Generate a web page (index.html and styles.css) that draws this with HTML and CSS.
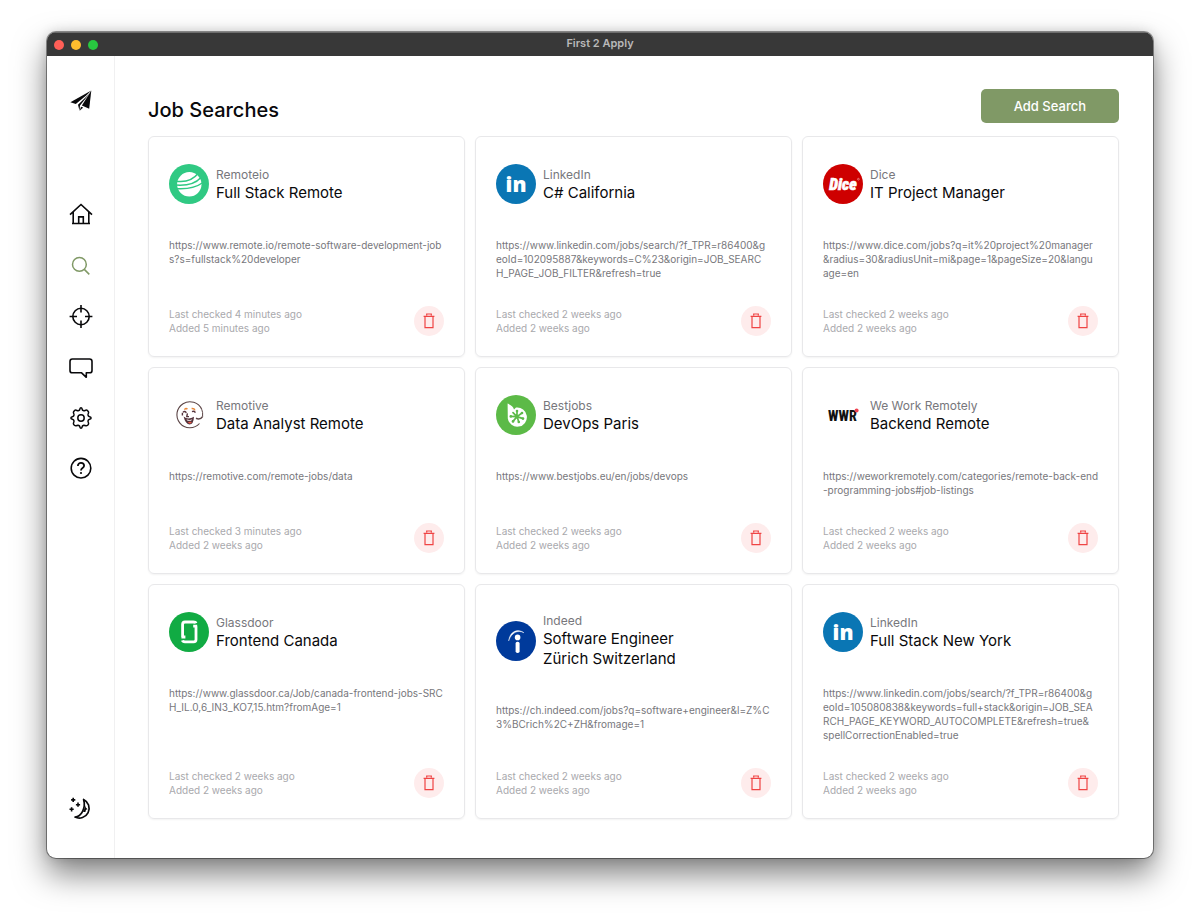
FILE: index.html
```html
<!DOCTYPE html>
<html lang="en">
<head>
    <meta charset="UTF-8">
    <meta name="viewport" content="width=device-width, initial-scale=1.0">
    <title>First 2 Apply</title>
    <link rel="stylesheet" href="styles.css">
</head>
<body>
    <!-- Shared icon -->
    <svg class="sprite" aria-hidden="true">
        <symbol id="icon-trash" viewBox="0 0 16 16">
            <path d="M5.7 2.6V1h4.6V2.6M2.6 3.3h10.8M4 3.3V14.6h8V3.3" fill="none" stroke="currentColor" stroke-width="1.2"/>
        </symbol>
    </svg>

    <div class="window">
        <header class="titlebar">
            <div class="controls">
                <button class="control close" type="button" aria-label="Close"></button>
                <button class="control minimize" type="button" aria-label="Minimize"></button>
                <button class="control zoom" type="button" aria-label="Zoom"></button>
            </div>
            <span class="window-title">First 2 Apply</span>
        </header>

        <div class="layout">
            <nav class="sidebar" aria-label="Main">
                <a class="nav-link brand" href="#" aria-label="First 2 Apply">
                    <svg viewBox="0 0 24 24" fill="currentColor">
                        <path d="M22.3 1.6 1.4 13.2 6.8 15 17.2 6.6Z"/>
                        <path d="M20.6 4.4 9 15.8 10.5 21.8 11 16.6Z"/>
                        <path d="M22.3 1.6 12.9 16.6 20.2 19.8Z"/>
                        <path d="M12 17.7 14.2 18.6 10.7 21.8Z"/>
                    </svg>
                </a>
                <a class="nav-link" href="#" aria-label="Home">
                    <svg viewBox="0 0 24 24" fill="none" stroke="currentColor" stroke-width="1.6">
                        <path d="M1 12.7 12 2.5 23 12.7M4.2 10.2V21.5H19.8V10.2M9.7 21.5V14.9H14.3V21.5M3 21.5H21"/>
                    </svg>
                </a>
                <a class="nav-link active" href="#" aria-label="Job searches">
                    <svg viewBox="0 0 24 24" fill="none" stroke="currentColor" stroke-width="1.5">
                        <circle cx="10.4" cy="11.4" r="6.9"/>
                        <path d="M15.3 16.4 20.3 21.4"/>
                    </svg>
                </a>
                <a class="nav-link" href="#" aria-label="Filters">
                    <svg viewBox="0 0 24 24" fill="none" stroke="currentColor" stroke-width="1.6">
                        <circle cx="12" cy="12.5" r="8.2"/>
                        <path d="M12 1V8.5M12 16.5V24M.6 12.5H8M16 12.5H23.4"/>
                    </svg>
                </a>
                <a class="nav-link" href="#" aria-label="Feedback">
                    <svg viewBox="0 0 24 24" fill="none" stroke="currentColor" stroke-width="1.6" stroke-linejoin="round">
                        <path d="M3.4 4H20.6Q23 4 23 6.4V15.4Q23 17.8 20.6 17.8H17.3V22.3L12.6 17.8H3.4Q1 17.8 1 15.4V6.4Q1 4 3.4 4Z"/>
                    </svg>
                </a>
                <a class="nav-link" href="#" aria-label="Settings">
                    <svg viewBox="0 0 24 24" fill="none" stroke="currentColor" stroke-width="1.5" stroke-linejoin="round">
                        <path d="M10.3 4.3C11 3.9 10.6 1.8 12 1.8S13 3.9 13.7 4.3L14.9 4.8C15.8 5 17 3.4 18.3 4.4L19.3 5.5C20.3 6.8 18.8 8 19 8.9L19.5 10.2C20 11 22.1 10.6 22.1 12S20 13 19.5 13.8L19 15C18.8 16 20.3 17.2 19.3 18.4L18.3 19.5C17 20.5 15.8 19 14.9 19.2L13.7 19.7C13 20.1 13.4 22.2 12 22.2S11 20.1 10.3 19.7L9.1 19.2C8.2 19 7 20.5 5.7 19.5L4.7 18.4C3.7 17.2 5.2 16 5 15L4.5 13.8C4 13 1.9 13.4 1.9 12S4 11 4.5 10.2L5 8.9C5.2 8 3.7 6.8 4.7 5.5L5.7 4.4C7 3.4 8.2 5 9.1 4.8Z"/>
                        <circle cx="12" cy="12" r="3.2"/>
                    </svg>
                </a>
                <a class="nav-link" href="#" aria-label="Help">
                    <svg viewBox="0 0 24 24" fill="none" stroke="currentColor" stroke-width="1.6">
                        <circle cx="12" cy="11.2" r="9.8"/>
                        <path d="M8.9 9C8.9 4.8 15.1 5.1 15.1 8.8 15.1 11.2 12 11 12 13.5" stroke-width="1.8"/>
                        <circle cx="12" cy="16" r="1.1" fill="currentColor" stroke="none"/>
                    </svg>
                </a>
                <button class="nav-link theme" type="button" aria-label="Toggle theme">
                    <svg viewBox="0 0 24 24" fill="none" stroke="currentColor" stroke-width="1.7">
                        <path d="M14.6 2.4A9.7 9.7 0 1 1 6 20C12.4 19.6 17 11 14.6 2.4Z" stroke-linejoin="round"/>
                        <path d="M16 8.2 16.8 10.4 18.6 12.2 17 12.8 16.4 15 14 15 11.6 17.8Q15.8 14 16 8.2Z" fill="currentColor" stroke="none"/>
                        <path d="M4.2 .8V5M2.1 2.9H6.3M9 5.6V9.8M6.9 7.7H11.1M2.6 10.2V14.4M.5 12.3H4.7" stroke-width="1.6"/>
                    </svg>
                </button>
            </nav>

            <main class="content">
                <div class="page-header">
                    <h1>Job Searches</h1>
                    <button class="add-button" type="button">Add Search</button>
                </div>

                <div class="cards">
                    <article class="card">
                        <div class="card-header">
                            <svg class="logo" viewBox="0 0 40 40" aria-hidden="true">
                                <circle cx="20" cy="20" r="20" fill="#30c983"/>
                                <circle cx="20.3" cy="20.3" r="12.2" fill="#fff"/>
                                <path d="M7 17.2C16 18.6 24 16 29.5 9M7 21C18 21.8 27 19 32 13.4M7 24.6C18 25.4 27 23.6 34 18.5" fill="none" stroke="#30c983" stroke-width="1.5"/>
                            </svg>
                            <div class="card-heading">
                                <p class="site">Remoteio</p>
                                <h2>Full Stack Remote</h2>
                            </div>
                        </div>
                        <p class="url">https://www.remote.io/remote-software-development-jobs?s=fullstack%20developer</p>
                        <div class="card-footer">
                            <p class="dates">Last checked 4 minutes ago<br>Added 5 minutes ago</p>
                            <button class="delete" type="button" aria-label="Delete search"><svg><use href="#icon-trash"/></svg></button>
                        </div>
                    </article>

                    <article class="card">
                        <div class="card-header">
                            <svg class="logo" viewBox="0 0 40 40" aria-hidden="true">
                                <circle cx="20" cy="20" r="20" fill="#0a76b4"/>
                                <text class="logo-in" x="20" y="28" text-anchor="middle" fill="#fff">in</text>
                            </svg>
                            <div class="card-heading">
                                <p class="site">LinkedIn</p>
                                <h2>C# California</h2>
                            </div>
                        </div>
                        <p class="url">https://www.linkedin.com/jobs/search/?f_TPR=r86400&amp;g<br>eoId=102095887&amp;keywords=C%23&amp;origin=JOB_SEARC<br>H_PAGE_JOB_FILTER&amp;refresh=true</p>
                        <div class="card-footer">
                            <p class="dates">Last checked 2 weeks ago<br>Added 2 weeks ago</p>
                            <button class="delete" type="button" aria-label="Delete search"><svg><use href="#icon-trash"/></svg></button>
                        </div>
                    </article>

                    <article class="card">
                        <div class="card-header">
                            <svg class="logo" viewBox="0 0 40 40" aria-hidden="true">
                                <circle cx="20" cy="20" r="20" fill="#ce0000"/>
                                <text class="logo-dice" x="20" y="26" text-anchor="middle" fill="#fff" stroke="#fff" stroke-width="0.6">Dice</text>
                                <circle cx="35.4" cy="15.2" r="0.9" fill="none" stroke="#fff" stroke-width="0.4"/>
                            </svg>
                            <div class="card-heading">
                                <p class="site">Dice</p>
                                <h2>IT Project Manager</h2>
                            </div>
                        </div>
                        <p class="url">https://www.dice.com/jobs?q=it%20project%20manager&amp;radius=30&amp;radiusUnit=mi&amp;page=1&amp;pageSize=20&amp;language=en</p>
                        <div class="card-footer">
                            <p class="dates">Last checked 2 weeks ago<br>Added 2 weeks ago</p>
                            <button class="delete" type="button" aria-label="Delete search"><svg><use href="#icon-trash"/></svg></button>
                        </div>
                    </article>

                    <article class="card">
                        <div class="card-header">
                            <svg class="logo" viewBox="0 0 40 40" fill="none" aria-hidden="true">
                                <path d="M32.8 14.5A13 13 0 1 0 30.5 28.5" stroke="#5c4546" stroke-width="1.1"/>
                                <path d="M27 23.3C29.5 24.5 32 24 33.8 21.3" stroke="#5c4546" stroke-width="1.5"/>
                                <path d="M32.8 14.5Q34 17.5 33.6 21" stroke="#5c4546" stroke-width="1"/>
                                <path d="M15.4 14.6Q17 12.4 18.4 14.2M22.6 13.6Q25.4 13.4 26 15.4" stroke="#e8873a" stroke-width="1.5"/>
                                <path d="M14 17.2Q16 15.6 17.3 17.8M23 16.6Q25.4 15.6 26.4 17.6M13.4 17.8V20.6M18.4 18.4 17.8 21.6H20" stroke="#55343c" stroke-width="1.4"/>
                                <path d="M14.6 21.6Q19 25.4 25 21.8 24.6 29.6 20.4 29.6 16.2 28.8 14.6 21.6Z" fill="#55343c"/>
                                <path d="M17.4 24.2Q20.4 25.6 23.4 24.2L22 25.8 18.6 25.7Z" fill="#fff"/>
                                <path d="M18.8 27.8Q21 26 22.8 27.4 21.4 29.4 18.8 27.8Z" fill="#ed5a4a"/>
                            </svg>
                            <div class="card-heading">
                                <p class="site">Remotive</p>
                                <h2>Data Analyst Remote</h2>
                            </div>
                        </div>
                        <p class="url">https://remotive.com/remote-jobs/data</p>
                        <div class="card-footer">
                            <p class="dates">Last checked 3 minutes ago<br>Added 2 weeks ago</p>
                            <button class="delete" type="button" aria-label="Delete search"><svg><use href="#icon-trash"/></svg></button>
                        </div>
                    </article>

                    <article class="card">
                        <div class="card-header">
                            <svg class="logo" viewBox="0 0 40 40" aria-hidden="true">
                                <circle cx="20" cy="20" r="20" fill="#5cba47"/>
                                <path d="M11.6 8.6C15.2 10 17.4 12.2 18 14.4L20 12.6A9.6 9.6 0 1 1 11.8 23.5Z" fill="#fff"/>
                                <path d="M21 21.6V16M21 21.6 26 18M21 21.6 27 23.6M21 21.6 22.8 27M21 21.6 17 26.4M21 21.6 14.8 21.4M21 21.6 17 17.6" stroke="#5cba47" stroke-width="1.7" stroke-linecap="round"/>
                                <g fill="#5cba47">
                                    <circle cx="21" cy="16" r="1.3"/>
                                    <circle cx="26" cy="18" r="1.3"/>
                                    <circle cx="27" cy="23.6" r="1.3"/>
                                    <circle cx="22.8" cy="27" r="1.3"/>
                                    <circle cx="17" cy="26.4" r="1.3"/>
                                    <circle cx="14.8" cy="21.4" r="1.3"/>
                                </g>
                            </svg>
                            <div class="card-heading">
                                <p class="site">Bestjobs</p>
                                <h2>DevOps Paris</h2>
                            </div>
                        </div>
                        <p class="url">https://www.bestjobs.eu/en/jobs/devops</p>
                        <div class="card-footer">
                            <p class="dates">Last checked 2 weeks ago<br>Added 2 weeks ago</p>
                            <button class="delete" type="button" aria-label="Delete search"><svg><use href="#icon-trash"/></svg></button>
                        </div>
                    </article>

                    <article class="card">
                        <div class="card-header">
                            <svg class="logo" viewBox="0 0 40 40" aria-hidden="true">
                                <text class="logo-wwr" x="5" y="26" fill="#111">WWR</text>
                                <circle cx="33.6" cy="15.4" r="2" fill="#ee4250"/>
                            </svg>
                            <div class="card-heading">
                                <p class="site">We Work Remotely</p>
                                <h2>Backend Remote</h2>
                            </div>
                        </div>
                        <p class="url">https://weworkremotely.com/categories/remote-back-end-programming-jobs#job-listings</p>
                        <div class="card-footer">
                            <p class="dates">Last checked 2 weeks ago<br>Added 2 weeks ago</p>
                            <button class="delete" type="button" aria-label="Delete search"><svg><use href="#icon-trash"/></svg></button>
                        </div>
                    </article>

                    <article class="card">
                        <div class="card-header">
                            <svg class="logo" viewBox="0 0 40 40" fill="none" aria-hidden="true">
                                <circle cx="20" cy="20" r="20" fill="#11ab43"/>
                                <path d="M13.6 25V12.4Q13.6 10 16 10H24.2Q26.6 10 27 11.2M12.4 25H16.4M27 14.2V27.4Q27 29.8 24.6 29.8H16Q13.8 29.8 13.4 28.4M24.2 14.2H28.2" stroke="#fff" stroke-width="2.8"/>
                            </svg>
                            <div class="card-heading">
                                <p class="site">Glassdoor</p>
                                <h2>Frontend Canada</h2>
                            </div>
                        </div>
                        <p class="url">https://www.glassdoor.ca/Job/canada-frontend-jobs-SRCH_IL.0,6_IN3_KO7,15.htm?fromAge=1</p>
                        <div class="card-footer">
                            <p class="dates">Last checked 2 weeks ago<br>Added 2 weeks ago</p>
                            <button class="delete" type="button" aria-label="Delete search"><svg><use href="#icon-trash"/></svg></button>
                        </div>
                    </article>

                    <article class="card">
                        <div class="card-header">
                            <svg class="logo" viewBox="0 0 40 40" aria-hidden="true">
                                <circle cx="20" cy="20" r="20" fill="#003a9b"/>
                                <circle cx="21.6" cy="16.4" r="2.8" fill="#fff"/>
                                <rect x="19.6" y="20.8" width="4" height="11.2" rx="1.8" fill="#fff"/>
                                <path d="M12.6 20C13.6 11.2 21 6.6 28 11.8 22 8.6 15.6 11.4 12.6 20Z" fill="#fff" stroke="#fff" stroke-width="0.4"/>
                            </svg>
                            <div class="card-heading">
                                <p class="site">Indeed</p>
                                <h2>Software Engineer<br>Zürich Switzerland</h2>
                            </div>
                        </div>
                        <p class="url">https://ch.indeed.com/jobs?q=software+engineer&amp;l=Z%C3%BCrich%2C+ZH&amp;fromage=1</p>
                        <div class="card-footer">
                            <p class="dates">Last checked 2 weeks ago<br>Added 2 weeks ago</p>
                            <button class="delete" type="button" aria-label="Delete search"><svg><use href="#icon-trash"/></svg></button>
                        </div>
                    </article>

                    <article class="card">
                        <div class="card-header">
                            <svg class="logo" viewBox="0 0 40 40" aria-hidden="true">
                                <circle cx="20" cy="20" r="20" fill="#0a76b4"/>
                                <text class="logo-in" x="20" y="28" text-anchor="middle" fill="#fff">in</text>
                            </svg>
                            <div class="card-heading">
                                <p class="site">LinkedIn</p>
                                <h2>Full Stack New York</h2>
                            </div>
                        </div>
                        <p class="url">https://www.linkedin.com/jobs/search/?f_TPR=r86400&amp;g<br>eoId=105080838&amp;keywords=full+stack&amp;origin=JOB_SEA<br>RCH_PAGE_KEYWORD_AUTOCOMPLETE&amp;refresh=true&amp;<br>spellCorrectionEnabled=true</p>
                        <div class="card-footer">
                            <p class="dates">Last checked 2 weeks ago<br>Added 2 weeks ago</p>
                            <button class="delete" type="button" aria-label="Delete search"><svg><use href="#icon-trash"/></svg></button>
                        </div>
                    </article>
                </div>
            </main>
        </div>
    </div>
</body>
</html>
```

FILE: styles.css
```css
:root {
    --foreground: #09090b;
    --primary: #809966;
    --muted: #77777c;
    --faint: #a9a9ad;
    --border: #e8e8ea;
    --danger: #ef4444;
    --danger-soft: #feecec;
    --titlebar: #383838;
}

* {
    box-sizing: border-box;
}

body {
    display: flex;
    min-height: 100vh;
    margin: 0;
    padding: 32px 47px 62px;
    background: #fff;
    color: var(--foreground);
    font-family: Inter, "Liberation Sans", sans-serif;
}

h1, h2, p {
    margin: 0;
}

button {
    padding: 0;
    border: none;
    background: none;
    font-family: inherit;
    cursor: pointer;
}

.sprite {
    position: absolute;
    width: 0;
    height: 0;
}

/* Window */
.window {
    display: flex;
    flex: 1;
    flex-direction: column;
    overflow: hidden;
    border-radius: 9px;
    background: #fff;
    box-shadow: 0 0 0 1px rgba(0, 0, 0, 0.4), 0 16px 32px rgba(0, 0, 0, 0.5), 0 0 12px rgba(0, 0, 0, 0.15);
}

.titlebar {
    display: grid;
    grid-template-columns: 1fr auto 1fr;
    align-items: center;
    height: 24px;
    padding: 0 7px;
    border-top: 1px solid #6e6e6e;
    background: var(--titlebar);
}

.controls {
    display: flex;
    gap: 7px;
}

.control {
    width: 10px;
    height: 10px;
    border-radius: 50%;
}

.close { background: #ff5f57; }
.minimize { background: #febc2e; }
.zoom { background: #28c840; }

.window-title {
    align-self: start;
    color: #b9b9b9;
    font-size: 11px;
    font-weight: 600;
    line-height: 20px;
}

.layout {
    display: flex;
    flex: 1;
}

/* Sidebar */
.sidebar {
    display: flex;
    flex-direction: column;
    align-items: center;
    gap: 27px;
    width: 68px;
    padding: 33px 0 37px;
    border-right: 1px solid #f0f0f1;
}

.nav-link {
    width: 24px;
    height: 24px;
    color: var(--foreground);
}

.nav-link svg {
    display: block;
    width: 24px;
    height: 24px;
}

.nav-link.active {
    color: var(--primary);
}

.brand {
    margin-bottom: 62px;
}

.theme {
    margin-top: auto;
}

/* Page */
.content {
    flex: 1;
    padding: 33px 34px 38px 33px;
}

.page-header {
    display: flex;
    align-items: flex-end;
    justify-content: space-between;
    margin-bottom: 13px;
}

h1 {
    font-size: 20px;
    font-weight: 500;
    line-height: 26px;
}

.add-button {
    height: 34px;
    padding: 0 33px;
    border-radius: 5px;
    background: var(--primary);
    color: #fff;
    font-size: 13px;
    font-weight: 500;
}

.cards {
    display: grid;
    grid-template-columns: repeat(3, minmax(0, 1fr));
    gap: 10px;
}

.card {
    display: flex;
    flex-direction: column;
    padding: 27px 20px 20px;
    border: 1px solid var(--border);
    border-radius: 6px;
    box-shadow: 0 1px 2px rgba(0, 0, 0, 0.05);
}

.card-header {
    display: flex;
    align-items: center;
    gap: 7px;
    min-height: 40px;
    margin-bottom: 34px;
}

.logo {
    flex: none;
    width: 40px;
    height: 40px;
}

.site {
    color: var(--muted);
    font-size: 12px;
    line-height: 17px;
}

h2 {
    font-size: 15px;
    font-weight: 400;
    line-height: 20px;
}

.url {
    margin-bottom: 26px;
    color: var(--muted);
    font-size: 10px;
    line-height: 14px;
    word-break: break-all;
}

.card-footer {
    display: flex;
    align-items: center;
    justify-content: space-between;
    margin-top: auto;
}

.dates {
    color: var(--faint);
    font-size: 10px;
    line-height: 14px;
}

.delete {
    display: flex;
    align-items: center;
    justify-content: center;
    width: 30px;
    height: 30px;
    border-radius: 50%;
    background: var(--danger-soft);
    color: var(--danger);
}

.delete svg {
    width: 16px;
    height: 16px;
}

/* Lettering inside the logos */
.logo-in {
    font-family: "Open Sans", sans-serif;
    font-size: 21px;
    font-weight: 800;
}

.logo-dice {
    font-family: "Roboto Condensed", Roboto, sans-serif;
    font-size: 16px;
    font-style: italic;
    font-weight: 900;
}

.logo-wwr {
    font-family: "Roboto Condensed", Roboto, sans-serif;
    font-size: 14px;
    font-weight: 800;
}
```
